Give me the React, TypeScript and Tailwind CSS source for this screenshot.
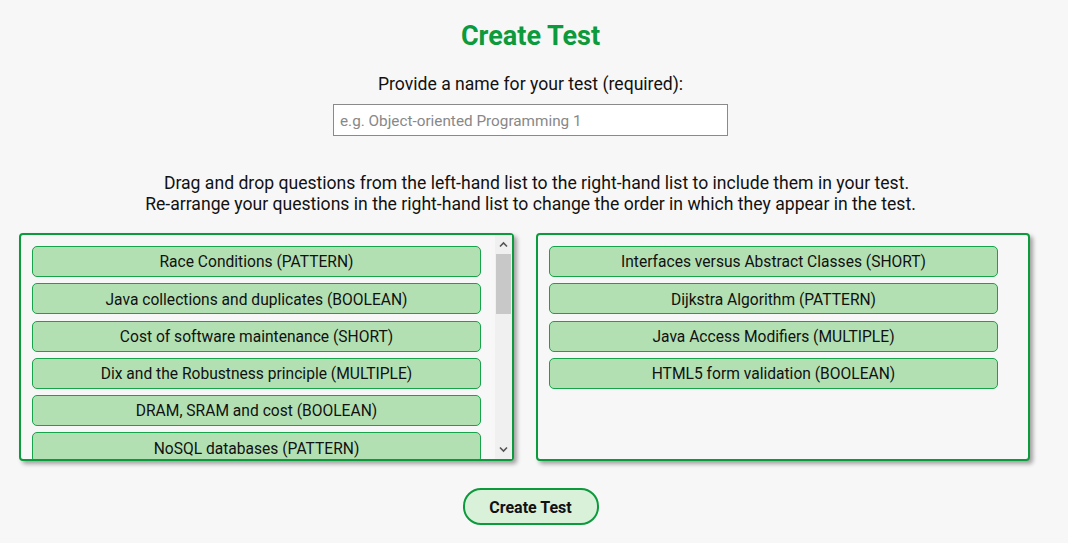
import React from 'react';

const available = [
  'Race Conditions (PATTERN)',
  'Java collections and duplicates (BOOLEAN)',
  'Cost of software maintenance (SHORT)',
  'Dix and the Robustness principle (MULTIPLE)',
  'DRAM, SRAM and cost (BOOLEAN)',
  'NoSQL databases (PATTERN)',
  'Big-O of binary search (SHORT)',
  'TCP three-way handshake (MULTIPLE)',
];

const chosen = [
  'Interfaces versus Abstract Classes (SHORT)',
  'Dijkstra Algorithm (PATTERN)',
  'Java Access Modifiers (MULTIPLE)',
  'HTML5 form validation (BOOLEAN)',
];

function Item({ label }: { label: string }) {
  return (
    <li className="shrink-0 w-[449px] h-[31px] pt-[3px] flex items-center justify-center bg-[#b3e0b3] border border-[#16a34a] rounded-[5px] text-[15.6px] text-[#111]">
      {label}
    </li>
  );
}

function Arrow({ up }: { up?: boolean }) {
  return (
    <svg width="17" height="17" viewBox="0 0 17 17" className="shrink-0">
      <path
        d={up ? 'M5 10.5 8.5 7 12 10.5' : 'M5 6.5 8.5 10 12 6.5'}
        fill="none"
        stroke="#555"
        strokeWidth="1.6"
      />
    </svg>
  );
}

export default function App() {
  return (
    <div className="min-h-[543px] bg-[#f7f7f7] font-['Roboto',sans-serif] text-[#111] pt-[20px]">
      <div className="w-[1061px] flex flex-col items-center">
        <h1 className="text-[27px] leading-[32px] font-bold text-[#0b9a3c]">Create Test</h1>
        <label className="mt-[21px] text-[17.6px] leading-[22px]">Provide a name for your test (required):</label>
        <input
          className="mt-[9px] w-[395px] h-[32px] bg-white border border-[#8a8a8a] px-[6px] pt-[2px] text-[15.3px] outline-none placeholder:text-[#888]"
          placeholder="e.g. Object-oriented Programming 1"
        />
        <div className="mt-[37px] text-[17.6px] leading-[21px] text-center">
          <div className="pl-[12px]">
            Drag and drop questions from the left-hand list to the right-hand list to include them in your test.
          </div>
          <div>Re-arrange your questions in the right-hand list to change the order in which they appear in the test.</div>
        </div>
      </div>
      <div className="mt-[18px] flex gap-[22px] pl-[19px]">
        <div className="w-[495px] h-[228px] flex border-2 border-[#0b9a3c] rounded-[4px] bg-[#f7f7f7] shadow-[3px_3px_4px_rgba(0,0,0,0.35)]">
          <ul className="flex-1 overflow-hidden pt-[11px] pl-[11px] flex flex-col gap-[6.3px]">
            {available.map((q) => (
              <Item key={q} label={q} />
            ))}
          </ul>
          <div className="w-[17px] bg-[#f0f0f0] flex flex-col pt-[1px] pb-[1px]">
            <Arrow up />
            <div className="mt-[1px] mx-[1px] h-[60px] bg-[#c8c8c8]" />
            <div className="flex-1" />
            <Arrow />
          </div>
        </div>
        <ul className="w-[494px] h-[228px] border-2 border-[#0b9a3c] rounded-[4px] bg-[#f7f7f7] shadow-[3px_3px_4px_rgba(0,0,0,0.35)] pt-[11px] pl-[11px] flex flex-col gap-[6.3px]">
          {chosen.map((q) => (
            <Item key={q} label={q} />
          ))}
        </ul>
      </div>
      <div className="w-[1061px] flex justify-center">
        <button className="mt-[27px] w-[136px] h-[37px] pt-[2px] rounded-[18px] border-2 border-[#0b9a3c] bg-[#d9f0d9] font-bold text-[16px] text-[#111]">
          Create Test
        </button>
      </div>
    </div>
  );
}
